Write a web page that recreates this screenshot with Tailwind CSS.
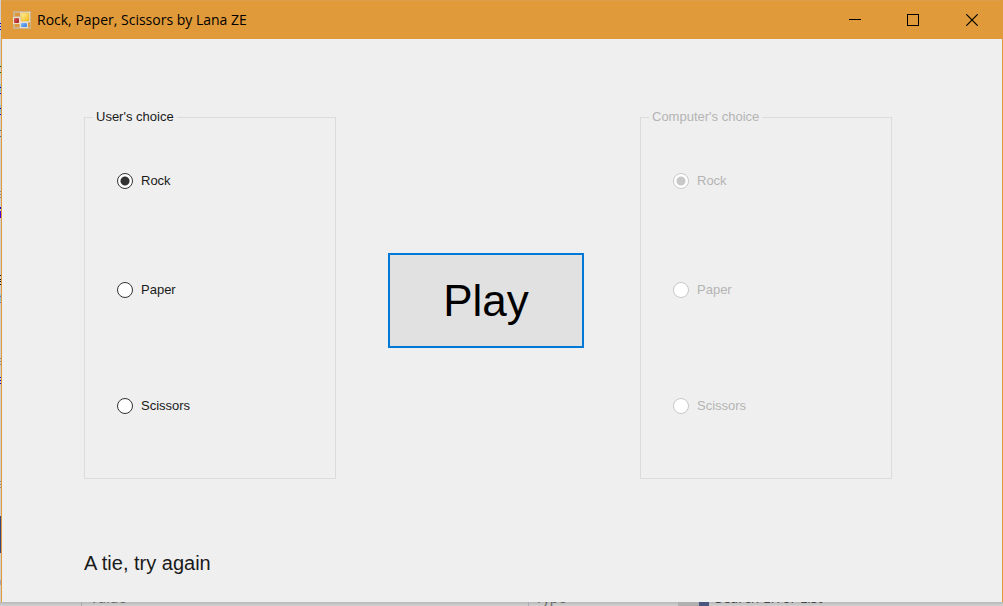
<!DOCTYPE html>
<html lang="en">
<head>
<meta charset="utf-8">
<title>Rock, Paper, Scissors by Lana ZE</title>
<script src="https://cdn.jsdelivr.net/npm/@tailwindcss/browser@4"></script>
</head>
<body class="flex h-screen flex-col overflow-hidden bg-[#c9c9c9] font-['Liberation_Sans',Arial,sans-serif] text-[#1a1a1a]">
  <div class="flex min-h-0 flex-1">
    <!-- sliver of the editor behind the window -->
    <svg class="h-full w-px shrink-0 bg-[#d0d0d0]" viewBox="0 0 1 602" preserveAspectRatio="none" shape-rendering="crispEdges" aria-hidden="true">
      <path fill="#0000d8" d="M0 23h1v1H0zM0 26h1v1H0zM0 29h1v1H0zM0 87h1v1H0zM0 93h1v1H0zM0 108h1v1H0zM0 114h1v1H0zM0 207h1v2H0zM0 377h1v1H0zM0 380h1v1H0zM0 383h1v1H0z"/>
      <path fill="#007000" d="M0 66h1v1H0zM0 72h1v1H0z"/>
      <path fill="#8cc4d4" d="M0 84h1v3H0zM0 88h1v4H0zM0 105h1v3H0zM0 109h1v4H0zM0 294h1v7H0z"/>
      <path fill="#2b8098" d="M0 130h1v1H0zM0 136h1v1H0z"/>
      <path fill="#888" d="M0 191h1v1H0zM0 194h1v1H0zM0 197h1v1H0zM0 358h1v1H0zM0 361h1v1H0zM0 364h1v1H0zM0 481h1v1H0zM0 484h1v1H0zM0 487h1v1H0z"/>
      <path fill="#4800d8" d="M0 211h1v7H0z"/>
      <path fill="#111" d="M0 275h1v1H0zM0 279h1v1H0zM0 281h1v1H0zM0 284h1v1H0z"/>
      <path fill="#6670dd" d="M0 296h1v1H0zM0 302h1v1H0z"/>
      <path fill="#36477d" d="M0 516h1v37H0z"/>
      <path fill="#a3a8be" d="M0 580h1v5H0z"/>
    </svg>

    <section class="flex min-w-0 flex-1 flex-col border-x border-[#e09a39] bg-[#efefef]" aria-label="Rock, Paper, Scissors by Lana ZE">
      <header class="flex h-[39px] shrink-0 items-center border-t border-[#dc9e4a] bg-[#e09a39] pl-[11px] text-black">
        <svg class="size-[18px] shrink-0" viewBox="0 0 18 18" aria-hidden="true">
          <defs>
            <linearGradient id="gold" x2="1" y2="1"><stop stop-color="#fff0a0"/><stop offset="1" stop-color="#f3bd17"/></linearGradient>
            <linearGradient id="red" x2="1" y2="1"><stop stop-color="#d96868"/><stop offset="1" stop-color="#a51616"/></linearGradient>
            <linearGradient id="blue" x2="1" y2="1"><stop stop-color="#86bcff"/><stop offset="1" stop-color="#347be0"/></linearGradient>
          </defs>
          <path fill="#cdb28c" d="M0 0h18v18H0z"/>
          <path fill="#dc983c" d="M2 2h5v3H2zM2 13h4v3H2zM15 12h2v4h-2z"/>
          <path fill="#eadfca" d="M7 1h10v10H7zM0 6h7v7H0zM7 11h8v6H7z"/>
          <rect x="8" y="2" width="8" height="8" rx="1" fill="url(#gold)" stroke="#dda820" stroke-width=".5"/>
          <rect x="1" y="7" width="5" height="5" rx="1" fill="url(#red)"/>
          <rect x="8" y="12" width="6" height="4" rx="1" fill="url(#blue)"/>
        </svg>
        <h1 class="ml-1.5 min-w-0 flex-1 truncate font-['Open_Sans','Noto_Sans',sans-serif] text-[14px] leading-5">Rock, Paper, Scissors by Lana ZE</h1>
        <button type="button" aria-label="Minimize" class="flex h-full w-[58px] items-center justify-center">
          <svg class="size-3" viewBox="0 0 12 12" shape-rendering="crispEdges"><path d="M0 5.5h12" stroke="#000"/></svg>
        </button>
        <button type="button" aria-label="Maximize" class="flex h-full w-[58px] items-center justify-center">
          <svg class="size-3" viewBox="0 0 12 12" shape-rendering="crispEdges"><path d="M.5.5h11v11H.5z" fill="none" stroke="#000"/></svg>
        </button>
        <button type="button" aria-label="Close" class="flex h-full w-[60px] items-center justify-center">
          <svg class="size-3" viewBox="0 0 12 12"><path d="M.3.3l11.4 11.4M11.7.3L.3 11.7" stroke="#000" stroke-width="1.2"/></svg>
        </button>
      </header>

      <main class="flex flex-1 flex-col pt-[69px] pr-[110px] pl-[82px]">
        <div class="flex items-start">
          <fieldset class="flex-1 border border-[#dcdcdc] pb-[62px] pl-2">
            <legend class="px-[3px] text-[13px] leading-[18px]">User's choice</legend>
            <div class="flex flex-col items-start pt-[45px] pl-6 text-[13px] leading-5">
              <label class="flex items-center gap-2"><input type="radio" name="user" checked class="size-4 appearance-none rounded-full border border-[#333] bg-white bg-[radial-gradient(circle,#333_4px,transparent_5px)]">Rock</label>
              <label class="mt-[89px] flex items-center gap-2"><input type="radio" name="user" class="size-4 appearance-none rounded-full border border-[#333] bg-white">Paper</label>
              <label class="mt-24 flex items-center gap-2"><input type="radio" name="user" class="size-4 appearance-none rounded-full border border-[#333] bg-white">Scissors</label>
            </div>
          </fieldset>

          <button type="button" class="mt-[145px] mr-14 ml-[52px] h-[95px] w-[196px] border-2 border-[#0078d7] bg-[#e1e1e1] text-[44px] leading-none text-black">Play</button>

          <fieldset disabled class="flex-1 border border-[#dcdcdc] pb-[62px] pl-2 text-[#b4b4b4]">
            <legend class="px-[3px] text-[13px] leading-[18px]">Computer's choice</legend>
            <div class="flex flex-col items-start pt-[45px] pl-6 text-[13px] leading-5">
              <label class="flex items-center gap-2"><input type="radio" name="computer" checked class="size-4 appearance-none rounded-full border border-[#c8c8c8] bg-white bg-[radial-gradient(circle,#c8c8c8_4px,transparent_5px)]">Rock</label>
              <label class="mt-[89px] flex items-center gap-2"><input type="radio" name="computer" class="size-4 appearance-none rounded-full border border-[#c8c8c8] bg-white">Paper</label>
              <label class="mt-24 flex items-center gap-2"><input type="radio" name="computer" class="size-4 appearance-none rounded-full border border-[#c8c8c8] bg-white">Scissors</label>
            </div>
          </fieldset>
        </div>
        <p class="mt-[72px] text-[20px] leading-6" role="status">A tie, try again</p>
      </main>
    </section>
  </div>

  <!-- top-clipped strip of the panels below the window -->
  <div class="flex h-1 shrink-0 items-end overflow-hidden bg-linear-to-b from-[#b8b8b8] to-[#d2d2d2] font-['Open_Sans','Noto_Sans',sans-serif] text-[14px] leading-4 text-[#666]" aria-hidden="true">
    <div class="w-[81px]"></div>
    <div class="w-[447px] border-l border-[#aaa] pl-2">Value</div>
    <div class="w-[150px] border-l border-[#aab] pl-1.5">Type</div>
    <div class="h-1 w-[21px] bg-[#b0b0b0]"></div>
    <div class="h-1 w-2.5 bg-[#4a5680]"></div>
    <div class="pl-1.5 text-[#444]">Search Error List</div>
  </div>
</body>
</html>
